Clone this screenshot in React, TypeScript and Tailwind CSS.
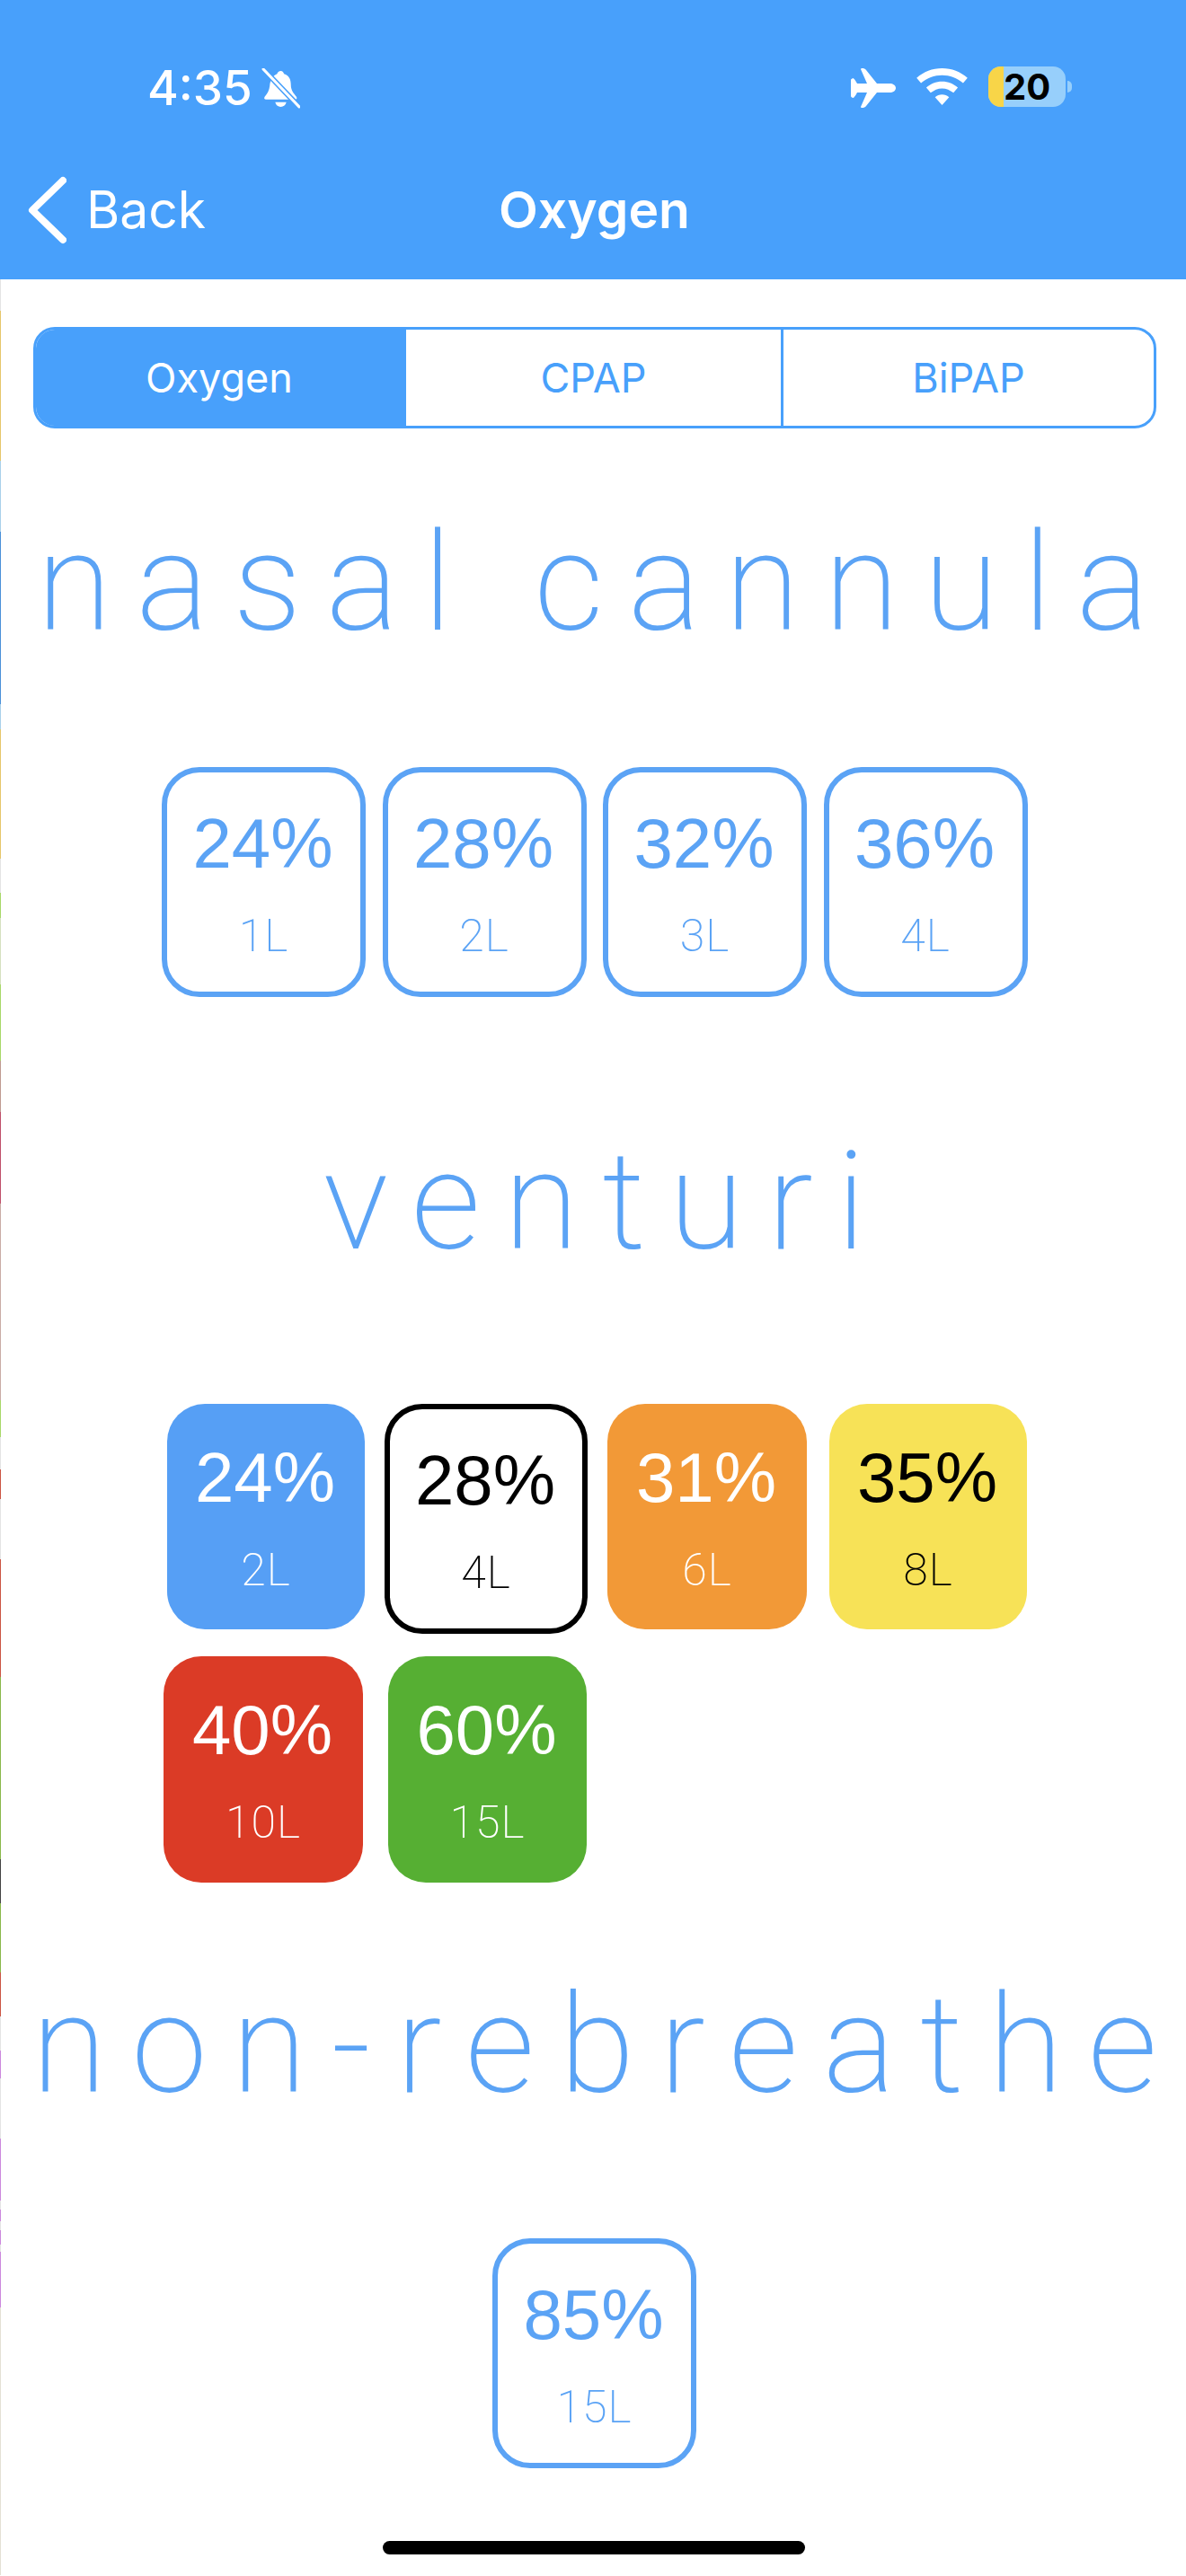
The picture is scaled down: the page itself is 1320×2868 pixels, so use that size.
const edgeStrip = [
  "h-[35px] bg-[#e4e4e4]",
  "h-[167px] bg-[#e6c66a]",
  "h-[79px] bg-[#a9d0ea]",
  "h-[192px] bg-[#4a90d9]",
  "h-[28px] bg-[#a9d0ea]",
  "h-[144px] bg-[#e6c66a]",
  "h-[38px] bg-[#e4e4e4]",
  "h-[28px] bg-[#a8d868]",
  "h-[74px] bg-[#d5e0c0]",
  "h-[85px] bg-[#a8d868]",
  "h-[57px] bg-[#c09a90]",
  "h-[102px] bg-[#c0506a]",
  "h-[219px] bg-[#c9aca5]",
  "h-[41px] bg-[#a8d868]",
  "h-[36px] bg-[#e4e4e4]",
  "h-[33px] bg-[#cc5544]",
  "h-[67px] bg-[#e4e4e4]",
  "h-[131px] bg-[#cc5544]",
  "h-[203px] bg-[#8ab84a]",
  "h-[49px] bg-[#444444]",
  "h-[77px] bg-[#8ab84a]",
  "h-[49px] bg-[#cc5544]",
  "h-[38px] bg-[#e4e4e4]",
  "h-[31px] bg-[#cc88dd]",
  "h-[67px] bg-[#e4e4e4]",
  "h-[69px] bg-[#cc88dd]",
  "h-[10px] bg-[#e4e4e4]",
  "h-[13px] bg-[#cc88dd]",
  "h-[10px] bg-[#e4e4e4]",
  "h-[16px] bg-[#cc88dd]",
  "h-[8px] bg-[#e4e4e4]",
  "h-[62px] bg-[#cc88dd]",
  "h-[298px] bg-[#e4e0d4]",
];

const nasal = [
  { pct: "24%", flow: "1L" },
  { pct: "28%", flow: "2L" },
  { pct: "32%", flow: "3L" },
  { pct: "36%", flow: "4L" },
];

function Tile({
  pct,
  flow,
  className,
}: {
  pct: string;
  flow: string;
  className: string;
}) {
  return (
    <div className={`flex shrink-0 flex-col items-center rounded-[42px] ${className}`}>
      <span className="mt-[35px] pr-[2px] font-['Liberation_Sans',sans-serif] text-[78px] leading-[88px]">{pct}</span>
      <span className="mt-[32px] font-['Roboto',sans-serif] text-[50px] leading-[54px] font-extralight tracking-[1px]">{flow}</span>
    </div>
  );
}

const outlineBlue = "h-[256px] w-[227px] border-[6px] border-[#5ba3f5] text-[#5ba3f5]";

function Heading({ children, className }: { children: string; className: string }) {
  return (
    <h2
      className={`text-center font-['Roboto',sans-serif] text-[152px] leading-[170px] font-extralight whitespace-nowrap text-[#5ba3f5] ${className}`}
    >
      {children}
    </h2>
  );
}

export default function App() {
  return (
    <div className="relative flex min-h-[2868px] w-[1320px] flex-col overflow-hidden bg-white font-['Inter',sans-serif]">
      {/* Status + nav bar */}
      <header className="flex h-[311px] flex-col bg-[#48a0fb] text-white">
        <div className="flex h-[190px] items-start justify-between pt-[74px] pr-[127px] pl-[164px]">
          <div className="flex items-center gap-[10px]">
            <span className="text-[53px] leading-[48px] font-medium">4:35</span>
            <svg viewBox="0 0 42 44" className="h-[45px] w-[43px]" fill="white">
              <path d="M21 3c2 0 3 1.500 3.500 3C30 7.500 32 12 32 18c0 6 3 9 6 13 1 1.500 .5 3-1.500 3H5c-2 0-2.500-1.500-1.500-3 3-3.500 5-7 5.500-12 .5-6 3-11 8-13C17.500 4.500 19 3 21 3zM15 37h12c-.5 3-3 5-6 5s-5.500-2-6-5z" />
              <path d="M2 1l39 41" stroke="#48a0fb" strokeWidth="6" />
              <path d="M2 1l39 41" stroke="white" strokeWidth="3" strokeLinecap="round" />
            </svg>
          </div>
          <div className="flex items-start">
            <svg viewBox="0 0 50 44" className="mt-[2px] h-[44px] w-[50px]" fill="white">
              <path d="M0 13c0-1 2-2 2.500-2S5 13 7 17h11L11 1c0-1 1-1 2-1s3 .5 4 2l12 15h14c4 0 7 2 7 5s-3 5-7 5H29L17 42c-1 1.500-3 2-4 2s-2 0-2-1l7-16H7c-2 4-4 6-4.500 6S0 32 0 31z" />
            </svg>
            <svg viewBox="0 0 58 42" className="mt-[2px] ml-[23px] h-[41px] w-[57px]" fill="white">
              <path d="M29 0c11 0 21 4 29 11l-5 6C46 11 38 8 29 8S12 11 5 17L0 11C8 4 18 0 29 0z" />
              <path d="M29 15c7 0 13 2.500 18 7l-5 6c-4-3-8-5-13-5s-9 2-13 5l-5-6c5-4.500 11-7 18-7z" />
              <path d="M29 30c3 0 6 1 8 3l-8 9-8-9c2-2 5-3 8-3z" />
            </svg>
            <div className="ml-[23px] flex h-[45px] w-[86px] items-center rounded-[14px] bg-[#97cffb]">
              <div className="h-full w-[17px] rounded-l-[14px] bg-[#f8d548]" />
              <span className="text-[40px] leading-[45px] font-bold text-black">20</span>
            </div>
            <div className="mt-[16px] ml-[2px] h-[13px] w-[5px] rounded-r-full bg-[#97cffb]" />
          </div>
        </div>
        <div className="grid h-[88px] grid-cols-[1fr_auto_1fr] items-center px-[30px]">
          <div className="flex items-center">
            <svg viewBox="0 0 44 76" className="h-[76px] w-[44px]" fill="none">
              <path d="M40 5L6 38l34 33" stroke="white" strokeWidth="8" strokeLinecap="round" strokeLinejoin="round" />
            </svg>
            <span className="ml-[22px] text-[57px] leading-[66px]">Back</span>
          </div>
          <span className="ml-[3px] text-[57px] leading-[66px] font-semibold">Oxygen</span>
          <div />
        </div>
      </header>

      <div className="flex flex-1">
        <aside className="flex w-px shrink-0 flex-col">
          {edgeStrip.map((seg, i) => (
            <div key={i} className={seg} />
          ))}
        </aside>

        <main className="flex min-w-0 flex-1 flex-col">
          {/* Segmented control */}
          <div className="mt-[53px] mr-[33px] ml-[36px] flex h-[113px] overflow-hidden rounded-[24px] border-[3px] border-[#48a0fb] text-[45px] text-[#48a0fb]">
            <div className="flex w-[412px] items-center justify-center bg-[#48a0fb] pr-[4px] text-white">Oxygen</div>
            <div className="flex w-[420px] items-center justify-center border-r-[3px] border-[#48a0fb]">CPAP</div>
            <div className="flex flex-1 items-center justify-center">BiPAP</div>
          </div>

          <Heading className="mt-[87px] pl-[26px] tracking-[27.2px]">nasal cannula</Heading>
          <div className="mt-[120px] ml-[179px] flex gap-[18.5px]">
            {nasal.map((t) => (
              <Tile key={t.pct} pct={t.pct} flow={t.flow} className={outlineBlue} />
            ))}
          </div>

          <Heading className="mt-[143px] pl-[28px] tracking-[26px]">venturi</Heading>
          <div className="mt-[140px] ml-[181px] flex gap-[22px]">
            <Tile pct="24%" flow="2L" className="ml-[4px] h-[251px] w-[220px] bg-[#569ff5] pt-[3px] text-white" />
            <Tile pct="28%" flow="4L" className="h-[256px] w-[226px] border-[6px] border-black bg-white text-black" />
            <Tile pct="31%" flow="6L" className="h-[251px] w-[222px] bg-[#f29937] pt-[3px] text-white" />
            <Tile pct="35%" flow="8L" className="ml-[3px] h-[251px] w-[220px] bg-[#f7e257] pt-[3px] text-black" />
          </div>
          <div className="mt-[25px] ml-[181px] flex gap-[28px]">
            <Tile pct="40%" flow="10L" className="h-[252px] w-[222px] bg-[#db3b26] pt-[3px] text-white" />
            <Tile pct="60%" flow="15L" className="h-[252px] w-[221px] bg-[#56af33] pt-[3px] text-white" />
          </div>

          <Heading className="mt-[96px] pl-[30px] tracking-[27.5px]">non-rebreathe</Heading>
          <div className="mt-[130px] ml-[547px] flex">
            <Tile pct="85%" flow="15L" className={outlineBlue} />
          </div>
        </main>
      </div>

      <div className="absolute top-[2829px] left-[426px] h-[15px] w-[470px] rounded-full bg-black" />
    </div>
  );
}
